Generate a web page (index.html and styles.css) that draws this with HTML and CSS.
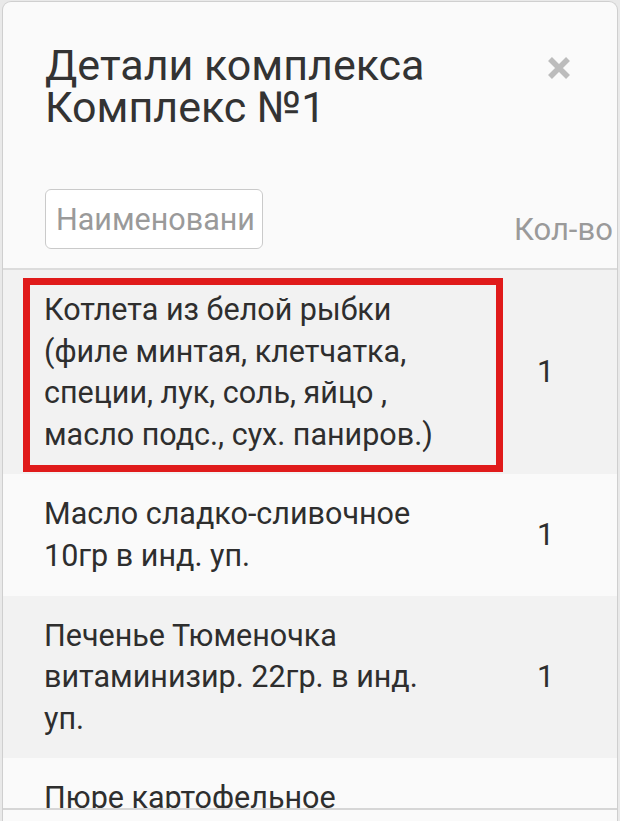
FILE: index.html
```html
<!DOCTYPE html>
<html lang="ru">
<head>
<meta charset="utf-8">
<title>Детали комплекса</title>
<link rel="stylesheet" href="styles.css">
</head>
<body>
<div class="modal">
  <div class="modal-header">
    <h2 class="modal-title">Детали комплекса<br>Комплекс №1</h2>
    <button class="close" type="button" aria-label="Закрыть">
      <svg width="24" height="24" viewBox="0 0 24 24"><path d="M3 3 L21 21 M21 3 L3 21" stroke="#bcbcbc" stroke-width="5.5" stroke-linecap="butt"/></svg>
    </button>
  </div>
  <div class="table">
    <div class="thead">
      <div class="th th-name"><input class="filter" type="text" placeholder="Наименование"></div>
      <div class="th th-qty">Кол-во</div>
    </div>
    <div class="tbody">
      <div class="tr odd">
        <div class="td td-name">Котлета из белой рыбки (филе минтая, клетчатка, специи, лук, соль, яйцо , масло подс., сух. паниров.)<span class="mark"></span></div>
        <div class="td td-qty">1</div>
      </div>
      <div class="tr">
        <div class="td td-name">Масло сладко-сливочное 10гр в инд. уп.</div>
        <div class="td td-qty">1</div>
      </div>
      <div class="tr odd">
        <div class="td td-name">Печенье Тюменочка витаминизир. 22гр. в инд. уп.</div>
        <div class="td td-qty">1</div>
      </div>
      <div class="tr tall">
        <div class="td td-name">Пюре картофельное</div>
        <div class="td td-qty">1</div>
      </div>
    </div>
  </div>
</div>
</body>
</html>
```
FILE: styles.css
```css
html, body {
  margin: 0;
  padding: 0;
  height: 100%;
  overflow: hidden;
}
body {
  background: #e9e9e9;
  font-family: Roboto, "Noto Sans", Arial, sans-serif;
  color: #333;
}
.modal {
  margin: 1px 2px 0 2px;
  height: 820px;
  box-sizing: border-box;
  border: 1px solid #cfcfcf;
  border-bottom: none;
  border-radius: 9px 9px 0 0;
  background: #fafafa;
  overflow: hidden;
}
.modal-header {
  display: flex;
  justify-content: space-between;
  align-items: flex-start;
  padding: 42px 46px 0 42px;
}
.modal-title {
  margin: 0;
  font-size: 43px;
  font-weight: 400;
  line-height: 42px;
  color: #333;
}
.close {
  margin-top: 12px;
  padding: 0;
  border: 0;
  background: none;
  width: 24px;
  height: 24px;
  line-height: 0;
}
.table {
  margin-top: 61px;
  width: 640px;
}
.thead {
  display: grid;
  grid-template-columns: 491px 1fr;
  align-items: end;
  padding-bottom: 19px;
  border-bottom: 2px solid #dcdcdc;
}
.th-name {
  padding-left: 42px;
}
.filter {
  display: block;
  box-sizing: border-box;
  width: 218px;
  height: 60px;
  border: 1.5px solid #cacaca;
  border-radius: 6px;
  background: #fff;
  padding: 0 8px 0 10px;
  font-family: Roboto, "Noto Sans", Arial, sans-serif;
  font-size: 30.5px;
  color: #333;
}
.filter::placeholder {
  color: #9a9a9a;
}
.th-qty {
  padding-left: 20px;
  font-size: 31px;
  line-height: 30px;
  color: #9a9a9a;
  padding-bottom: 4px;
}
.tbody {
  height: 538px;
  overflow: hidden;
  border-bottom: 2px solid #d6d6d6;
  background: #fafafa;
}
.tr {
  display: grid;
  grid-template-columns: 491px 1fr;
  align-items: center;
  background: #fafafa;
}
.tr.odd {
  background: #f2f2f2;
}
.tr.tall {
  min-height: 122px;
}
.td {
  font-size: 30.5px;
  line-height: 41.6px;
  color: #2e2e2e;
}
.td-name {
  position: relative;
  padding: 19px 44px 19px 41px;
}
.tr.tall .td-name {
  align-self: start;
}
.td-qty {
  padding-left: 43px;
}
.mark {
  position: absolute;
  left: 20px;
  top: 8px;
  width: 480px;
  height: 194px;
  box-sizing: border-box;
  border: 7px solid #e01b1b;
}
```
